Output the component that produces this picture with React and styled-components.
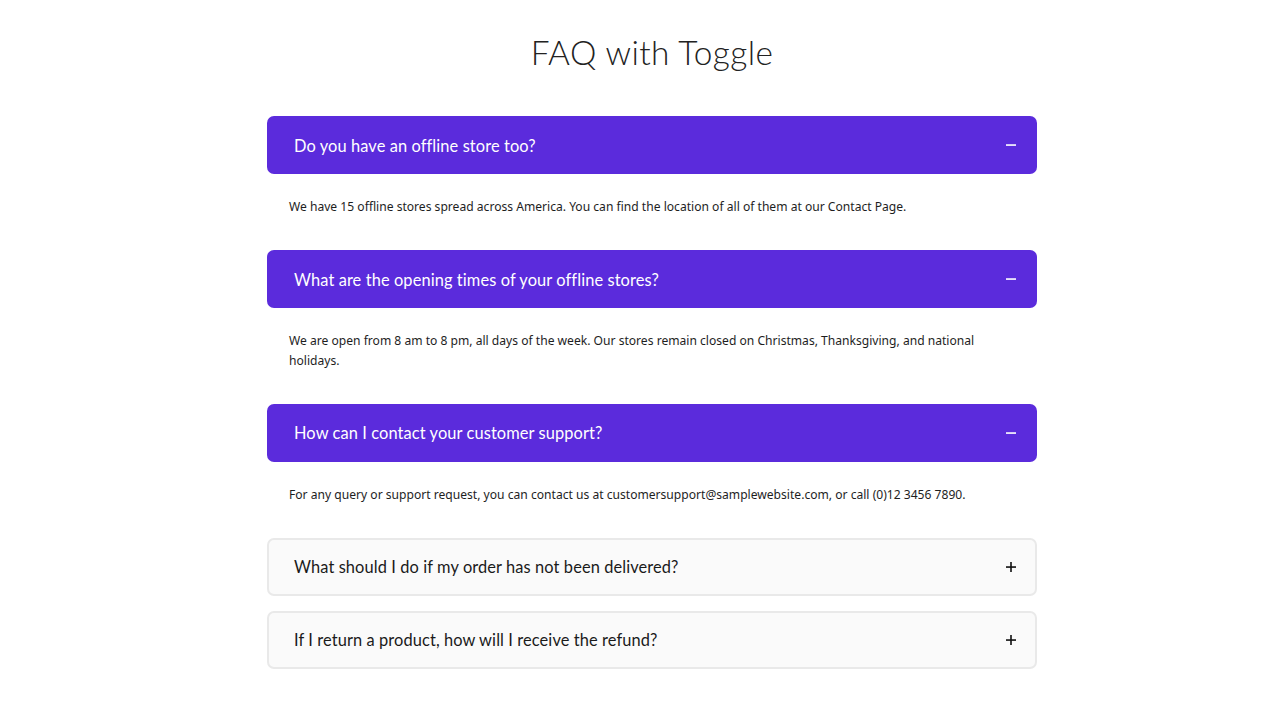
import React, { useState } from "react";
import styled, { createGlobalStyle } from "styled-components";

const Global = createGlobalStyle`
  * { box-sizing: border-box; }
  body { margin: 0; background: #ffffff; font-family: "Open Sans", "Noto Sans", sans-serif; }
`;

const Page = styled.div`
  width: 1280px;
  min-height: 720px;
  display: flex;
  flex-direction: column;
  align-items: center;
  padding: 30px 0 0 24px;
`;

const Title = styled.h1`
  margin: 0 0 42px;
  font-family: "Lato", "Noto Sans", sans-serif;
  font-weight: 300;
  font-size: 33.4px;
  line-height: 44px;
  color: #222222;
  letter-spacing: 0.4px;
`;

const List = styled.div`
  width: 770px;
  display: flex;
  flex-direction: column;
  gap: 15px;
`;

const Item = styled.div`
  display: flex;
  flex-direction: column;
`;

const Header = styled.button`
  height: 58px;
  width: 100%;
  display: flex;
  align-items: center;
  justify-content: space-between;
  border-radius: 7px;
  cursor: pointer;
  font-family: "Lato", "Noto Sans", sans-serif;
  font-size: 16.4px;
  letter-spacing: 0.1px;
  text-align: left;
  background: ${(p) => (p.$open ? "#5b2bdc" : "#fafafa")};
  color: ${(p) => (p.$open ? "#ffffff" : "#1a1a1a")};
  border: ${(p) => (p.$open ? "none" : "2px solid #e9e9e9")};
  padding: ${(p) => (p.$open ? "0 18px 0 27px" : "0 16px 0 25px")};
`;

const Sign = styled.span`
  width: 16px;
  height: 16px;
  display: flex;
  align-items: center;
  justify-content: center;
`;

const Answer = styled.div`
  padding: 23px 22px 18.5px;
  font-family: "Noto Sans", "Open Sans", sans-serif;
  font-size: 12.1px;
  line-height: 19.5px;
  color: #1e1e1e;
`;

const faqs = [
  {
    q: "Do you have an offline store too?",
    a: "We have 15 offline stores spread across America. You can find the location of all of them at our Contact Page.",
    open: true,
  },
  {
    q: "What are the opening times of your offline stores?",
    a: "We are open from 8 am to 8 pm, all days of the week. Our stores remain closed on Christmas, Thanksgiving, and national holidays.",
    open: true,
  },
  {
    q: "How can I contact your customer support?",
    a: "For any query or support request, you can contact us at customersupport@samplewebsite.com, or call (0)12 3456 7890.",
    open: true,
  },
  {
    q: "What should I do if my order has not been delivered?",
    a: "Please reach out to our customer support team with your order number and we will look into it right away.",
    open: false,
  },
  {
    q: "If I return a product, how will I receive the refund?",
    a: "Refunds are credited back to your original payment method within 5-7 business days.",
    open: false,
  },
];

function Icon({ open }) {
  return (
    <Sign>
      <svg width="12" height="12" viewBox="0 0 12 12">
        <rect x="1" y="5.25" width="10" height="1.6" fill={open ? "#ffffff" : "#111111"} />
        {!open && <rect x="5.2" y="1" width="1.6" height="10" fill="#111111" />}
      </svg>
    </Sign>
  );
}

export default function App() {
  const [state, setState] = useState(faqs.map((f) => f.open));
  const toggle = (i) => setState((s) => s.map((v, j) => (j === i ? !v : v)));
  return (
    <Page>
      <Global />
      <Title>FAQ with Toggle</Title>
      <List>
        {faqs.map((f, i) => (
          <Item key={i}>
            <Header $open={state[i]} onClick={() => toggle(i)}>
              <span>{f.q}</span>
              <Icon open={state[i]} />
            </Header>
            {state[i] && <Answer>{f.a}</Answer>}
          </Item>
        ))}
      </List>
    </Page>
  );
}
